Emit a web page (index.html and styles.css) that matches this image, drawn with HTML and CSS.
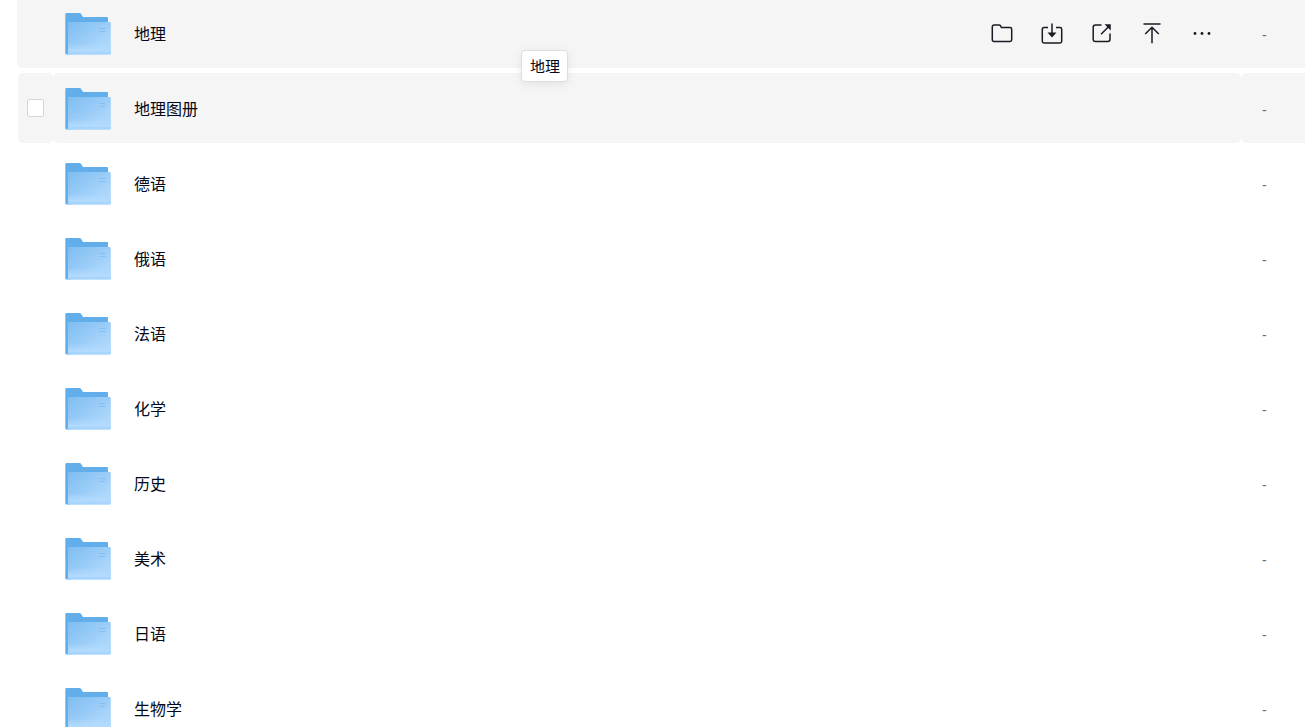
FILE: index.html
```html
<!DOCTYPE html>
<html lang="zh-CN">
<head>
<meta charset="utf-8">
<meta name="viewport" content="width=device-width, initial-scale=1">
<title>地理</title>
<link rel="stylesheet" href="styles.css">
</head>
<body>
<svg class="sprite" aria-hidden="true">
  <defs>
    <linearGradient id="front" x1="0" y1="0" x2="1" y2="1">
      <stop offset="0" stop-color="#7dbdf0"/>
      <stop offset="0.45" stop-color="#98cbf7"/>
      <stop offset="0.75" stop-color="#abd6fb"/>
      <stop offset="1" stop-color="#abd5fb"/>
    </linearGradient>
    <linearGradient id="glow" x1="0" y1="0" x2="0" y2="1">
      <stop offset="0.65" stop-color="#b4dcff" stop-opacity="0"/>
      <stop offset="0.9" stop-color="#b4dcff" stop-opacity="0.9"/>
      <stop offset="0.94" stop-color="#a4d3fb" stop-opacity="0.9"/>
      <stop offset="1" stop-color="#aad7ff"/>
    </linearGradient>
    <symbol id="folder" viewBox="0 0 46 42">
      <path d="M0.3 1.2Q0.3 0 1.5 0H14.6Q15.5 0 16 0.8L18 4H42Q43 4 43 5V12H6V41.4H1.5Q0.3 41.4 0.3 40.2Z" fill="#62aeeb"/>
      <path d="M3 9H44.5Q45.8 9 45.8 10.3V40.2Q45.8 41.6 44.5 41.6H2Q3 41 3 39.5Z" fill="url(#front)"/>
      <path d="M3 9H44.5Q45.8 9 45.8 10.3V40.2Q45.8 41.6 44.5 41.6H2Q3 41 3 39.5Z" fill="url(#glow)"/>
      <path d="M34 15.5H40.5M34 18.5H40.5" stroke="#87bff0" stroke-width="1"/>
    </symbol>
  </defs>
</svg>
<main class="file-list">
  <table class="files">
    <colgroup><col class="col-check"><col><col class="col-size"></colgroup>
    <tbody>
      <tr class="row active">
        <td></td>
        <td>
          <div class="entry">
            <svg class="folder"><use href="#folder"/></svg>
            <a class="name" href="#">地理</a>
            <div class="actions">
              <button type="button" aria-label="打开"><svg viewBox="0 0 22 22"><path d="M3.2 2H8.2Q9 2 9.4 2.7L10.4 4.5H19Q20.7 4.5 20.7 6.2V16.8Q20.7 18.5 19 18.5H3Q1.3 18.5 1.3 16.8V3.8Q1.3 2 3.2 2Z"/></svg></button>
              <button type="button" aria-label="下载"><svg viewBox="0 0 22 22"><path d="M7 4.5H3Q1.3 4.5 1.3 6.2V18.3Q1.3 20 3 20H19Q20.7 20 20.7 18.3V6.2Q20.7 4.5 19 4.5H15M11 .4V11"/><path class="solid" d="M8.2 10.2H13.8L11 13.4Z"/></svg></button>
              <button type="button" aria-label="分享"><svg viewBox="0 0 22 22"><path d="M10.5 2H4.5Q2.2 2 2.2 4.3V16.2Q2.2 18.5 4.5 18.5H16.8Q19 18.5 19 16.3V10.5M10 11.2L17.5 3.7"/><path class="solid" d="M15.4 2H19V5.6Z"/></svg></button>
              <button type="button" aria-label="置顶"><svg viewBox="0 0 22 22"><path d="M2.5 1.1H19.5M11 20.2V4.8M4.2 11L11 4.3L17.8 11"/></svg></button>
              <button type="button" aria-label="更多"><svg viewBox="0 0 22 22"><g class="dots"><circle cx="4" cy="10.5" r="1.4"/><circle cx="11" cy="10.5" r="1.4"/><circle cx="18" cy="10.5" r="1.4"/></g></svg></button>
            </div>
          </div>
        </td>
        <td class="size">-</td>
      </tr>
      <tr class="row hover">
        <td><input class="check" type="checkbox" aria-label="选择 地理图册"></td>
        <td><div class="entry"><svg class="folder"><use href="#folder"/></svg><a class="name" href="#">地理图册</a></div></td>
        <td class="size">-</td>
      </tr>
      <tr class="row"><td></td><td><div class="entry"><svg class="folder"><use href="#folder"/></svg><a class="name" href="#">德语</a></div></td><td class="size">-</td></tr>
      <tr class="row"><td></td><td><div class="entry"><svg class="folder"><use href="#folder"/></svg><a class="name" href="#">俄语</a></div></td><td class="size">-</td></tr>
      <tr class="row"><td></td><td><div class="entry"><svg class="folder"><use href="#folder"/></svg><a class="name" href="#">法语</a></div></td><td class="size">-</td></tr>
      <tr class="row"><td></td><td><div class="entry"><svg class="folder"><use href="#folder"/></svg><a class="name" href="#">化学</a></div></td><td class="size">-</td></tr>
      <tr class="row"><td></td><td><div class="entry"><svg class="folder"><use href="#folder"/></svg><a class="name" href="#">历史</a></div></td><td class="size">-</td></tr>
      <tr class="row"><td></td><td><div class="entry"><svg class="folder"><use href="#folder"/></svg><a class="name" href="#">美术</a></div></td><td class="size">-</td></tr>
      <tr class="row"><td></td><td><div class="entry"><svg class="folder"><use href="#folder"/></svg><a class="name" href="#">日语</a></div></td><td class="size">-</td></tr>
      <tr class="row"><td></td><td><div class="entry"><svg class="folder"><use href="#folder"/></svg><a class="name" href="#">生物学</a></div></td><td class="size">-</td></tr>
    </tbody>
  </table>
  <div class="tooltip" role="tooltip">地理</div>
</main>
</body>
</html>
```
FILE: styles.css
```css
* {
  box-sizing: border-box;
}

body {
  margin: 0;
  background: #fff;
  color: #03081a;
  font-family: "Liberation Sans", "Noto Sans CJK SC", sans-serif;
  font-size: 16px;
  line-height: 24px;
}

.sprite {
  position: absolute;
  width: 0;
  height: 0;
}

.file-list {
  position: relative;
  height: 100vh;
  overflow: hidden;
  padding-left: 18px;
}

/* The list is scrolled slightly past the top of its first row. */
.files {
  width: 100%;
  margin-top: -7px;
  table-layout: fixed;
  border-collapse: separate;
  border-spacing: 0 5px;
}

.col-check {
  width: 35px;
}

.col-size {
  width: 64px;
}

.row td {
  height: 70px;
  padding: 0;
  vertical-align: middle;
}

.active td,
.hover td {
  background: #f5f5f5;
}

.active td:first-child {
  border-radius: 5px 0 0 5px;
  box-shadow: -1px 0 #f5f5f5;
}

.hover td {
  border-radius: 5px;
}

.hover td:last-child {
  border-radius: 5px 0 0 5px;
}

.check {
  display: block;
  width: 17px;
  height: 18px;
  margin: 0 auto;
  appearance: none;
  background: #fff;
  border: 1px solid #d6d6d6;
  border-radius: 2px;
}

.entry {
  display: flex;
  align-items: center;
  padding: 2px 14px 0 12px;
}

.folder {
  width: 46px;
  height: 42px;
  margin-right: 23px;
}

.name {
  padding-top: 1px;
  color: inherit;
  text-decoration: none;
}

.actions {
  display: flex;
  margin-left: auto;
}

.actions button {
  display: flex;
  align-items: center;
  justify-content: center;
  width: 50px;
  height: 42px;
  padding: 0;
  border: 0;
  background: none;
  cursor: pointer;
}

.actions svg {
  width: 22px;
  height: 22px;
  fill: none;
  stroke: #1a1a24;
  stroke-width: 1.5;
}

.actions .solid {
  fill: #1a1a24;
}

.actions .dots {
  fill: #1a1a24;
  stroke: none;
}

.row .size {
  padding-top: 3px;
  padding-left: 21px;
  color: #636d7e;
  font-size: 14px;
}

.tooltip {
  position: absolute;
  top: 50px;
  left: 521px;
  padding: 4px 7px 2px 8px;
  border: 1px solid #dcdce4;
  border-radius: 4px;
  background: #fff;
  box-shadow: 0 2px 10px rgba(0, 0, 0, 0.08);
  font-size: 15px;
}
```
